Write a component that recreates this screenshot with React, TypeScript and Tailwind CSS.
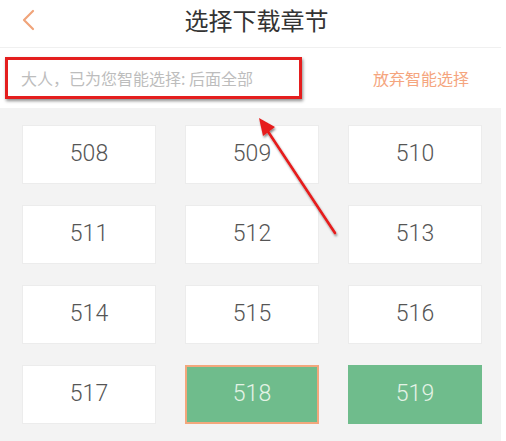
import * as React from "react";

const chapters = [508, 509, 510, 511, 512, 513, 514, 515, 516, 517, 518, 519];

function ChapterCell({ num }: { num: number }) {
    const picked = num === 518 || num === 519;
    const focused = num === 518;
    return (
        <div
            className={
                "h-[59px] flex items-center justify-center text-[23px] font-light " +
                (picked ? "bg-[#6fbc8c] text-[#e4f3e6] " : "bg-white text-[#555] border border-[#ececec] ") +
                (focused ? "border-2 border-[#f2a77c]" : "")
            }
            style={{ fontFamily: "Roboto, 'Liberation Sans', sans-serif" }}
        >
            {num}
        </div>
    );
}

export default function App() {
    return (
        <div
            className="relative w-[506px] h-[441px] bg-white overflow-hidden"
            style={{ fontFamily: "'Noto Sans CJK SC', 'Noto Sans', sans-serif" }}
        >
            <div className="w-[501px] flex flex-col h-full">
                {/* Header */}
                <div className="relative h-[48px] border-b border-[#f0f0f0] flex justify-center pt-[3px] shrink-0">
                    <svg className="absolute left-[21px] top-[9px]" width="16" height="22" viewBox="0 0 16 22" fill="none">
                        <path d="M12 2 L3 11 L12 20" stroke="#f0a47a" strokeWidth="2.2" strokeLinecap="round" strokeLinejoin="round" />
                    </svg>
                    <div className="text-[24px] text-[#333] leading-[34px] ml-[12px]">选择下载章节</div>
                </div>

                {/* Smart selection hint */}
                <div className="h-[60px] flex items-center justify-between pl-[21px] pr-[32px] shrink-0">
                    <span className="text-[16px] text-[#bdbdbd]">大人，已为您智能选择: 后面全部</span>
                    <span className="text-[16px] text-[#f5a57e]">放弃智能选择</span>
                </div>

                {/* Chapters grid */}
                <div className="flex-1 bg-[#f3f3f3] pt-[17px] pl-[22px]">
                    <div className="grid grid-cols-[134px_134px_134px] gap-x-[29px] gap-y-[21px]">
                        {chapters.map((n) => (
                            <ChapterCell key={n} num={n} />
                        ))}
                    </div>
                </div>
            </div>

            {/* Annotation overlay */}
            <div className="absolute left-[5px] top-[57px] w-[297px] h-[42px] border-[3px] border-[#e41e1e] shadow-[1px_2px_3px_rgba(0,0,0,0.45)]" />
            <svg className="absolute left-0 top-0 pointer-events-none" width="506" height="441">
                <defs>
                    <filter id="sh" x="-20%" y="-20%" width="140%" height="140%">
                        <feDropShadow dx="1" dy="2" stdDeviation="1.2" floodColor="#000" floodOpacity="0.45" />
                    </filter>
                </defs>
                <g filter="url(#sh)">
                    <line x1="335" y1="233" x2="267" y2="130" stroke="#e61a1a" strokeWidth="2.5" strokeLinecap="round" />
                    <polygon points="259,118 275,127 263,136" fill="#e61a1a" />
                </g>
            </svg>
        </div>
    );
}
